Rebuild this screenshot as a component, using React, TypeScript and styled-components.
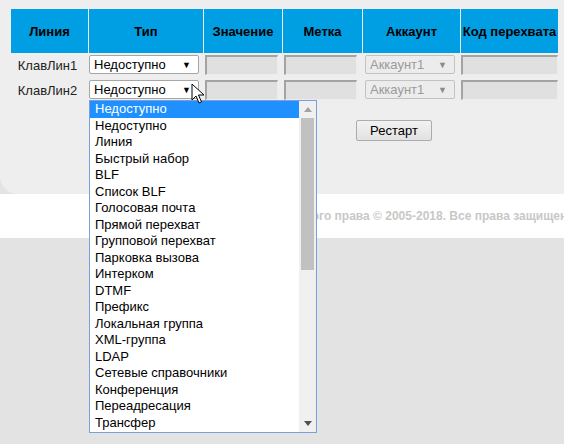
import React from 'react';
import styled, { createGlobalStyle } from 'styled-components';

const Global = createGlobalStyle`
  html, body {
    margin: 0;
    padding: 0;
    background: #e3e3e3;
    font-family: "Liberation Sans", Arial, sans-serif;
    overflow: hidden;
  }
`;

const Page = styled.div`
  position: relative;
  width: 564px;
  height: 444px;
  overflow: hidden;
`;

const Panel = styled.div`
  background: #eeeeee;
  height: 194px;
  box-sizing: border-box;
  padding: 9px 0 0 11px;
  border-bottom-left-radius: 18px;
`;

const Grid = styled.div`
  display: grid;
  grid-template-columns: 77px 114px 78px 79px 97px 97px;
  column-gap: 1px;
  width: 547px;
`;

const Head = styled.div`
  background: #009fe3;
  height: 44px;
  display: flex;
  align-items: center;
  justify-content: center;
  font-size: 13px;
  font-weight: bold;
  color: #000;
`;

const Cell = styled.div<{ $pad?: number }>`
  height: 25px;
  display: flex;
  align-items: flex-start;
  padding-top: 2px;
  padding-left: ${p => p.$pad ?? 0}px;
  box-sizing: border-box;
`;

const LabelCell = styled(Cell)`
  justify-content: center;
  padding-top: 5px;
  padding-right: 4px;
  font-size: 13px;
  color: #222;
`;

const Select = styled.div<{ $w: number; $disabled?: boolean }>`
  width: ${p => p.$w}px;
  height: 19px;
  box-sizing: border-box;
  border: 1px solid ${p => (p.$disabled ? '#c2c2c2' : '#a6a6a6')};
  border-radius: 2px;
  background: ${p => (p.$disabled ? '#ececec' : '#fff')};
  color: ${p => (p.$disabled ? '#9a9a9a' : '#000')};
  font-size: 13px;
  display: flex;
  align-items: center;
  justify-content: space-between;
  padding: 0 7px 0 4px;
`;

const Arrow = styled.span<{ $disabled?: boolean }>`
  font-size: 9px;
  color: ${p => (p.$disabled ? '#8a8a8a' : '#000')};
`;

const Input = styled.div<{ $w: number }>`
  width: ${p => p.$w}px;
  height: 20px;
  box-sizing: border-box;
  background: #e0e0e0;
  border-top: 2px solid #a3a3a3;
  border-left: 2px solid #a3a3a3;
  border-bottom: 1px solid #ececec;
  border-right: 1px solid #ececec;
`;

const ButtonRow = styled.div`
  padding: 17px 0 0 345px;
`;

const Button = styled.button`
  width: 76px;
  height: 21px;
  font-family: "Liberation Sans", Arial, sans-serif;
  font-size: 13px;
  color: #000;
  border: 1px solid #acacac;
  border-radius: 2px;
  background: linear-gradient(#f2f2f2, #e2e2e2);
  padding: 0;
`;

const Footer = styled.div`
  background: #fff;
  height: 44px;
  display: flex;
  align-items: center;
  padding-left: 263px;
  white-space: nowrap;
  font-size: 12px;
  font-weight: bold;
  color: #c8c8c8;
`;

const DropList = styled.div`
  position: absolute;
  left: 89px;
  top: 100px;
  width: 228px;
  height: 333px;
  box-sizing: border-box;
  border: 1px solid #7c9fd8;
  background: #fff;
  display: flex;
`;

const Options = styled.div`
  flex: 1;
`;

const Option = styled.div<{ $active?: boolean }>`
  height: 16.5px;
  line-height: 16.5px;
  padding-left: 5px;
  font-size: 13px;
  color: ${p => (p.$active ? '#fff' : '#000')};
  background: ${p => (p.$active ? '#1e90ff' : 'transparent')};
  white-space: nowrap;
`;

const Scroll = styled.div`
  width: 17px;
  background: #f0f0f0;
  display: flex;
  flex-direction: column;
  align-items: center;
`;

const ScrollBtn = styled.div`
  height: 17px;
  width: 17px;
  display: flex;
  align-items: center;
  justify-content: center;
`;

const Thumb = styled.div`
  width: 13px;
  height: 152px;
  background: #c1c1c1;
`;

const Track = styled.div`
  flex: 1;
  display: flex;
  flex-direction: column;
`;

const Cursor = styled.svg`
  position: absolute;
  left: 191px;
  top: 83px;
`;

const heads = ['Линия', 'Тип', 'Значение', 'Метка', 'Аккаунт', 'Код перехвата'];

const options = [
  'Недоступно',
  'Линия',
  'Быстрый набор',
  'BLF',
  'Список BLF',
  'Голосовая почта',
  'Прямой перехват',
  'Групповой перехват',
  'Парковка вызова',
  'Интерком',
  'DTMF',
  'Префикс',
  'Локальная группа',
  'XML-группа',
  'LDAP',
  'Сетевые справочники',
  'Конференция',
  'Переадресация',
  'Трансфер',
];

const Row = ({ label }: { label: string }) => (
  <>
    <LabelCell>{label}</LabelCell>
    <Cell>
      <Select $w={110}>
        Недоступно <Arrow>▼</Arrow>
      </Select>
    </Cell>
    <Cell $pad={1}>
      <Input $w={73} />
    </Cell>
    <Cell $pad={1}>
      <Input $w={73} />
    </Cell>
    <Cell $pad={2}>
      <Select $w={90} $disabled>
        Аккаунт1 <Arrow $disabled>▼</Arrow>
      </Select>
    </Cell>
    <Cell>
      <Input $w={97} />
    </Cell>
  </>
);

const App = () => (
  <Page>
    <Global />
    <Panel>
      <Grid>
        {heads.map(h => (
          <Head key={h}>{h}</Head>
        ))}
        <Row label="КлавЛин1" />
        <Row label="КлавЛин2" />
      </Grid>
      <ButtonRow>
        <Button>Рестарт</Button>
      </ButtonRow>
    </Panel>
    <Footer>Авторского права © 2005-2018. Все права защищены.</Footer>

    <DropList>
      <Options>
        <Option $active>Недоступно</Option>
        {options.map(o => (
          <Option key={o}>{o}</Option>
        ))}
      </Options>
      <Scroll>
        <ScrollBtn>
          <svg width="8" height="5" viewBox="0 0 8 5">
            <path d="M0 5 L4 0 L8 5 Z" fill="#a3a3a3" />
          </svg>
        </ScrollBtn>
        <Track>
          <Thumb />
        </Track>
        <ScrollBtn>
          <svg width="8" height="5" viewBox="0 0 8 5">
            <path d="M0 0 L4 5 L8 0 Z" fill="#505050" />
          </svg>
        </ScrollBtn>
      </Scroll>
    </DropList>

    <Cursor width="14" height="22" viewBox="0 0 14 22">
      <path
        d="M1 1 L1 17 L5 13 L8 20 L10.5 19 L7.5 12 L13 12 Z"
        fill="#fff"
        stroke="#000"
        strokeWidth="1"
        strokeLinejoin="round"
      />
    </Cursor>
  </Page>
);

export default App;
